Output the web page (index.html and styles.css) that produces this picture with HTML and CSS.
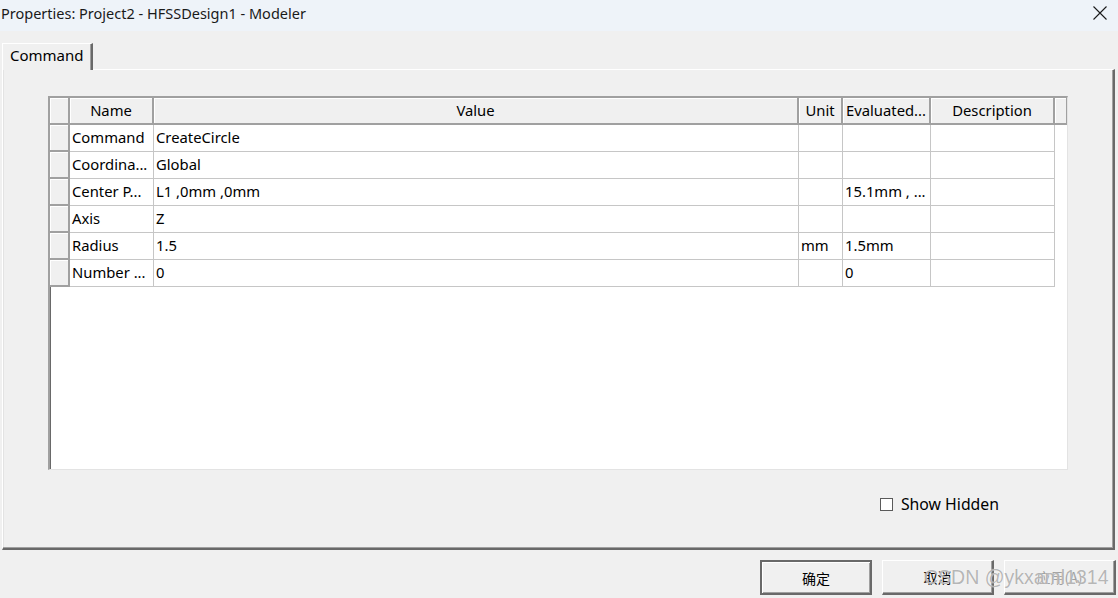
FILE: index.html
```html
<!DOCTYPE html>
<html lang="en">
<head>
  <meta charset="UTF-8">
  <title>Properties: Project2 - HFSSDesign1 - Modeler</title>
  <link rel="stylesheet" href="styles.css">
</head>
<body>
  <div class="window">
    <div class="titlebar">
      <span class="title">Properties: Project2 - HFSSDesign1 - Modeler</span>
      <svg class="close-icon" width="14" height="14" viewBox="0 0 14 14">
        <path d="M0.5 0.5 L13.5 13.5 M13.5 0.5 L0.5 13.5" stroke="#1a1a1a" stroke-width="1.1" fill="none"/>
      </svg>
    </div>

    <div class="tab-strip">
      <div class="tab active">Command</div>
    </div>

    <div class="tab-panel">
      <div class="grid-box">
        <table class="prop-grid">
          <colgroup>
            <col style="width:20px">
            <col style="width:84px">
            <col style="width:645px">
            <col style="width:44px">
            <col style="width:88px">
            <col style="width:124px">
            <col style="width:12px">
          </colgroup>
          <thead>
            <tr>
              <th class="corner"></th>
              <th>Name</th>
              <th>Value</th>
              <th>Unit</th>
              <th>Evaluated...</th>
              <th>Description</th>
              <th class="filler"></th>
            </tr>
          </thead>
          <tbody>
            <tr>
              <td class="row-head"></td>
              <td>Command</td>
              <td>CreateCircle</td>
              <td></td>
              <td></td>
              <td></td>
              <td class="blank"></td>
            </tr>
            <tr>
              <td class="row-head"></td>
              <td>Coordina...</td>
              <td>Global</td>
              <td></td>
              <td></td>
              <td></td>
              <td class="blank"></td>
            </tr>
            <tr>
              <td class="row-head"></td>
              <td>Center P...</td>
              <td>L1 ,0mm ,0mm</td>
              <td></td>
              <td>15.1mm , ...</td>
              <td></td>
              <td class="blank"></td>
            </tr>
            <tr>
              <td class="row-head"></td>
              <td>Axis</td>
              <td>Z</td>
              <td></td>
              <td></td>
              <td></td>
              <td class="blank"></td>
            </tr>
            <tr>
              <td class="row-head"></td>
              <td>Radius</td>
              <td>1.5</td>
              <td>mm</td>
              <td>1.5mm</td>
              <td></td>
              <td class="blank"></td>
            </tr>
            <tr>
              <td class="row-head"></td>
              <td>Number ...</td>
              <td>0</td>
              <td></td>
              <td>0</td>
              <td></td>
              <td class="blank"></td>
            </tr>
          </tbody>
        </table>
      </div>

      <div class="options-row">
        <label class="check">
          <span class="check-box"></span>
          <span>Show Hidden</span>
        </label>
      </div>
    </div>

    <div class="footer">
      <button class="dlg-btn default">确定</button>
      <button class="dlg-btn">取消</button>
      <button class="dlg-btn" disabled>应用(A)</button>
      <span class="watermark">CSDN @ykxaml1314</span>
    </div>
  </div>
</body>
</html>
```

FILE: styles.css
```css
/* Win32-style property dialog */
:root {
  --face: #f0f0f0;
  --title-bg: #eef3f9;
  --shadow: #a0a0a0;
  --dark-shadow: #696969;
  --grid-line: #c6c6c6;
  --text: #000000;
  --font-ui: "Noto Sans", "Noto Sans CJK SC", sans-serif;
}

* {
  box-sizing: border-box;
}

body {
  margin: 0;
  background: var(--face);
  font-family: var(--font-ui);
  font-size: 14px;
  color: var(--text);
}

.window {
  width: 1118px;
  height: 598px;
  display: flex;
  flex-direction: column;
  position: relative;
  overflow: hidden;
}

/* Title bar */
.titlebar {
  height: 31px;
  flex: none;
  background: var(--title-bg);
  display: flex;
  align-items: center;
  justify-content: space-between;
  padding: 0 11px 5px 1px;
}

.title {
  font-size: 14.5px;
  color: #1a1a1a;
}

/* Tabs */
.tab-strip {
  height: 38px;
  flex: none;
  display: flex;
  align-items: flex-end;
  padding-left: 2px;
}

.tab {
  width: 91px;
  height: 27px;
  padding: 1px 0 0 7px;
  border-top: 1px solid #ffffff;
  border-left: 1px solid #ffffff;
  border-right: 2px solid var(--dark-shadow);
  box-shadow: inset -1px 0 0 var(--shadow);
  margin-bottom: -1px;
  background: var(--face);
  position: relative;
  z-index: 1;
  font-size: 15px;
}

.tab-panel {
  height: 481px;
  flex: none;
  margin: 0 3px 0 2px;
  border-top: 1px solid #ffffff;
  border-left: 1px solid #ffffff;
  border-right: 2px solid var(--dark-shadow);
  border-bottom: 2px solid var(--dark-shadow);
  box-shadow: inset -1px -1px 0 var(--shadow), inset 1px 0 0 #e3e3e3;
  padding: 26px 0 0 45px;
}

/* Property grid */
.grid-box {
  width: 1020px;
  height: 374px;
  background: #ffffff;
  border-top: 2px solid var(--shadow);
  border-left: 2px solid var(--shadow);
  border-right: 1px solid #e3e3e3;
  border-bottom: 1px solid #e3e3e3;
  box-shadow: inset 1px 1px 0 var(--dark-shadow);
}

.prop-grid {
  table-layout: fixed;
  border-collapse: separate;
  border-spacing: 0;
  width: 1017px;
}

.prop-grid th {
  height: 27px;
  padding: 0 2px 1px;
  background: var(--face);
  font-weight: normal;
  font-size: 14.8px;
  text-align: center;
  white-space: nowrap;
  overflow: hidden;
  border-right: 2px solid var(--shadow);
  border-bottom: 2px solid var(--shadow);
  box-shadow: inset 1px 1px 0 #ffffff;
}

.prop-grid th.filler {
  border-right: 1px solid var(--shadow);
}

.prop-grid td {
  height: 27px;
  padding: 0 2px 2px 2px;
  font-size: 14.8px;
  white-space: nowrap;
  overflow: hidden;
  border-right: 1px solid var(--grid-line);
  border-bottom: 1px solid var(--grid-line);
}

.prop-grid td.row-head {
  background: var(--face);
  border-right: 2px solid var(--shadow);
  border-bottom: 2px solid var(--shadow);
  box-shadow: inset 1px 1px 0 #ffffff;
}

.prop-grid td.blank {
  border: none;
}

/* Checkbox row */
.options-row {
  display: flex;
  justify-content: flex-end;
  padding: 23px 114px 0 0;
}

.check {
  display: flex;
  align-items: center;
  gap: 8px;
  font-size: 15.8px;
}

.check-box {
  width: 13px;
  height: 13px;
  background: #ffffff;
  border: 1px solid #5a5a5a;
}

/* Footer buttons */
.footer {
  flex: 1;
  display: flex;
  justify-content: flex-end;
  align-items: flex-start;
  gap: 10px;
  padding: 10px 2px 0 0;
}

.dlg-btn {
  width: 112px;
  height: 35px;
  background: var(--face);
  font-family: "Noto Sans CJK SC", sans-serif;
  font-size: 14px;
  color: var(--text);
  border-top: 1px solid #ffffff;
  border-left: 1px solid #ffffff;
  border-right: 2px solid var(--dark-shadow);
  border-bottom: 2px solid var(--dark-shadow);
  box-shadow: inset -1px -1px 0 var(--shadow);
  padding: 0;
}

.dlg-btn.default {
  border: 2px solid var(--dark-shadow);
  box-shadow: inset 1px 1px 0 #ffffff, inset -1px -1px 0 var(--shadow);
}

.dlg-btn:disabled {
  color: #a0a0a0;
}

.watermark {
  position: absolute;
  left: 924px;
  top: 564px;
  font-family: "Liberation Sans", sans-serif;
  font-size: 19.5px;
  line-height: 26px;
  white-space: nowrap;
  color: rgba(150, 150, 150, 0.7);
  text-shadow: 0 0 1px #ffffff;
  pointer-events: none;
}
```
